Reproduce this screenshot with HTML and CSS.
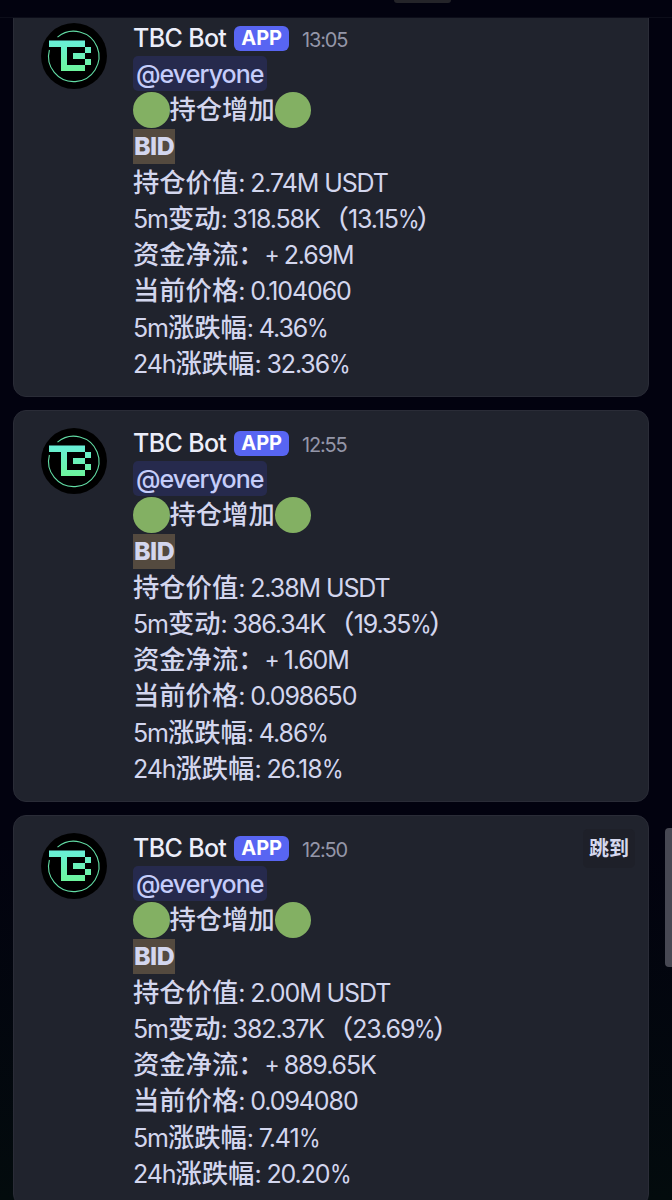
FILE: index.html
```html
<!DOCTYPE html>
<html lang="zh-CN">
<head>
  <meta charset="UTF-8" />
  <meta name="viewport" content="width=device-width, initial-scale=1.0"/>
  <title>TBC Bot</title>
  <link rel="stylesheet" href="styles.css">
</head>
<body>

<svg class="defs" width="0" height="0">
  <defs>
    <linearGradient id="mint" x1="0" y1="0" x2="0" y2="1">
      <stop offset="0" stop-color="#68efd9"/>
      <stop offset="1" stop-color="#6df59c"/>
    </linearGradient>
    <symbol id="logo" viewBox="0 0 66 66">
      <circle cx="33" cy="33" r="33" fill="#000"/>
      <path d="M16.5 14.2A25.2 25.2 0 1 1 8.4 27" fill="none" stroke="#62dda5" stroke-width="1.1"/>
      <path fill="url(#mint)" d="M8 17.5H44V24H50V30H44V24H26V42H44V36H50V42H44V48H20V24H8ZM32 30H44V36H32Z"/>
    </symbol>
  </defs>
</svg>

<div class="topbar"><div class="handle"></div></div>

<main class="list">
  <article class="card">
    <svg class="avatar"><use href="#logo"/></svg>
    <div class="message">
      <div class="row head"><span class="name">TBC Bot</span><span class="badge">APP</span><span class="time">13:05</span></div>
      <div class="row"><span class="mention">@everyone</span></div>
      <div class="row"><i class="dot"></i>持仓增加<i class="dot"></i></div>
      <div class="row"><b class="mark">BID</b></div>
      <div class="row">持仓价值<span class="num">: 2.74M USDT</span></div>
      <div class="row"><span class="num">5m</span>变动<span class="num">: 318.58K</span><span class="open">（</span><span class="num">13.15<small>%</small></span><span class="close">）</span></div>
      <div class="row">资金净流：<span class="num"><span class="plus">+</span> 2.69M</span></div>
      <div class="row">当前价格<span class="num">: 0.104060</span></div>
      <div class="row"><span class="num">5m</span>涨跌幅<span class="num">: 4.36<small>%</small></span></div>
      <div class="row"><span class="num">24h</span>涨跌幅<span class="num">: 32.36<small>%</small></span></div>
    </div>
  </article>

  <article class="card">
    <svg class="avatar"><use href="#logo"/></svg>
    <div class="message">
      <div class="row head"><span class="name">TBC Bot</span><span class="badge">APP</span><span class="time">12:55</span></div>
      <div class="row"><span class="mention">@everyone</span></div>
      <div class="row"><i class="dot"></i>持仓增加<i class="dot"></i></div>
      <div class="row"><b class="mark">BID</b></div>
      <div class="row">持仓价值<span class="num">: 2.38M USDT</span></div>
      <div class="row"><span class="num">5m</span>变动<span class="num">: 386.34K</span><span class="open">（</span><span class="num">19.35<small>%</small></span><span class="close">）</span></div>
      <div class="row">资金净流：<span class="num"><span class="plus">+</span> 1.60M</span></div>
      <div class="row">当前价格<span class="num">: 0.098650</span></div>
      <div class="row"><span class="num">5m</span>涨跌幅<span class="num">: 4.86<small>%</small></span></div>
      <div class="row"><span class="num">24h</span>涨跌幅<span class="num">: 26.18<small>%</small></span></div>
    </div>
  </article>

  <article class="card">
    <svg class="avatar"><use href="#logo"/></svg>
    <div class="message">
      <div class="row head"><span class="name">TBC Bot</span><span class="badge">APP</span><span class="time">12:50</span></div>
      <div class="row"><span class="mention">@everyone</span></div>
      <div class="row"><i class="dot"></i>持仓增加<i class="dot"></i></div>
      <div class="row"><b class="mark">BID</b></div>
      <div class="row">持仓价值<span class="num">: 2.00M USDT</span></div>
      <div class="row"><span class="num">5m</span>变动<span class="num">: 382.37K</span><span class="open">（</span><span class="num">23.69<small>%</small></span><span class="close">）</span></div>
      <div class="row">资金净流：<span class="num"><span class="plus">+</span> 889.65K</span></div>
      <div class="row">当前价格<span class="num">: 0.094080</span></div>
      <div class="row"><span class="num">5m</span>涨跌幅<span class="num">: 7.41<small>%</small></span></div>
      <div class="row"><span class="num">24h</span>涨跌幅<span class="num">: 20.20<small>%</small></span></div>
    </div>
    <button class="jump">跳到</button>
  </article>
</main>

<div class="scrollbar"></div>

</body>
</html>
```
FILE: styles.css
```css
* {
  box-sizing: border-box;
}
body {
  margin: 0;
  height: 1200px;
  overflow: hidden;
  position: relative;
  background: linear-gradient(#02020f, #02020f 70%, #030b0d);
  color: #d3d6ee;
  font-family: "Inter", "Noto Sans CJK SC", sans-serif;
}
.defs {
  position: absolute;
}
.topbar {
  height: 18px;
  border-bottom: 1px solid #0c0d19;
}
.handle {
  width: 57px;
  height: 3px;
  margin-left: 394px;
  border-radius: 0 0 4px 4px;
  background: #242429;
}
.list {
  height: 1182px;
  overflow: hidden;
  padding: 0 23px 0 13px;
}
.card {
  display: flex;
  align-items: flex-start;
  height: 391.5px;
  margin-bottom: 13.5px;
  padding: 14px 13px 0 27px;
  border: 1px solid #2a2c37;
  border-radius: 13px;
  background: #20232d;
}
.card:first-child {
  margin-top: -13px;
}
.avatar {
  width: 66px;
  height: 66px;
  margin: 3px 26px 0 0;
  flex: none;
}
.message {
  flex: 1;
}
.row {
  display: flex;
  align-items: baseline;
  height: 36.2px;
  line-height: 31.4px;
  font-family: "Noto Sans CJK SC", sans-serif;
  font-size: 26.3px;
  font-weight: 500;
  white-space: pre;
}
.num {
  font-family: "Inter", sans-serif;
  font-size: 25px;
  font-weight: 400;
  letter-spacing: -1.1px;
}
.num small {
  font-size: 25px;
  letter-spacing: -3px;
  display: inline-block;
  transform: scaleX(0.88);
  transform-origin: left;
}
.plus {
  font-size: 23px;
  letter-spacing: -2px;
  vertical-align: 1px;
}
.open {
  margin: 0 -1px 0 3px;
}
.close {
  margin-left: -3px;
}
.head {
  align-items: center;
}
.name {
  font-family: "Inter", sans-serif;
  font-size: 25px;
  font-weight: 500;
  line-height: 36.2px;
  letter-spacing: -0.65px;
  color: #eceefa;
}
.badge {
  height: 25px;
  margin-left: 8px;
  padding: 0 7px;
  border-radius: 6px;
  background: #5865f2;
  color: #fff;
  font-family: "Inter", sans-serif;
  font-size: 20px;
  font-weight: 700;
  line-height: 25px;
}
.time {
  margin: 4px 0 0 13px;
  font-family: "Inter", sans-serif;
  font-size: 20px;
  font-weight: 400;
  line-height: 36.2px;
  letter-spacing: -1.2px;
  color: #9496a8;
}
.mention {
  height: 35px;
  padding: 0 3px;
  border-radius: 5px;
  background: #262a4d;
  color: #c5cdfa;
  font-family: "Inter", sans-serif;
  font-size: 25px;
  font-weight: 500;
  line-height: 36.2px;
  letter-spacing: -0.95px;
}
.dot {
  align-self: center;
  width: 36.5px;
  height: 36px;
  border-radius: 50%;
  background: #83b063;
}
.mark {
  height: 35.5px;
  padding: 0 1px;
  background: #544a3f;
  font-family: "Inter", sans-serif;
  font-size: 25px;
  font-weight: 800;
  line-height: 35px;
  letter-spacing: -0.5px;
}
.jump {
  width: 52px;
  height: 39px;
  margin-top: -1px;
  padding: 0 0 3px;
  border: none;
  border-radius: 5px;
  background: #1e2029;
  color: #d5d8ee;
  font-family: "Noto Sans CJK SC", sans-serif;
  font-size: 20px;
  font-weight: 700;
}
.scrollbar {
  position: absolute;
  top: 828px;
  right: 0;
  width: 7px;
  height: 139px;
  border-radius: 4px 0 0 4px;
  background: #474853;
}
```
